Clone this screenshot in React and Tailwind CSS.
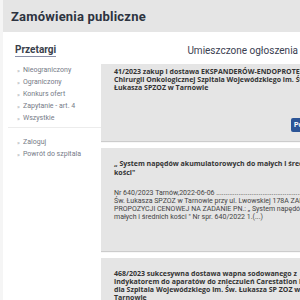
const mainLinks = ['Nieograniczony', 'Ograniczony', 'Konkurs ofert', 'Zapytanie - art. 4', 'Wszystkie'];
const otherLinks = ['Zaloguj', 'Powrót do szpitala'];

function NavItem({ label }) {
  return (
    <li className="flex items-center h-[12px] text-[7px] text-[#767b87]">
      <span className="w-[6px] text-[6px] text-[#a0a4ac]">»</span>
      <span>{label}</span>
    </li>
  );
}

export default function App() {
  return (
    <div className="w-[300px] h-[300px] overflow-hidden bg-[#f5f5f5] font-['Roboto',sans-serif]">
      <div className="ml-[3px] h-full flex flex-col bg-white">
        <header className="h-[32px] shrink-0 bg-[#e5e5e5] flex items-center pl-[8px]">
          <h1 className="text-[13px] font-bold text-[#2d3340] leading-none tracking-[0.2px]">Zamówienia publiczne</h1>
        </header>

        <div className="flex flex-1 min-h-0">
          <aside className="w-[98px] shrink-0 pt-[12px]">
            <h2 className="ml-[12px] w-fit text-[10px] font-bold text-[#3a3f4c] leading-[12px] border-b border-[#8a90a8]">
              Przetargi
            </h2>
            <ul className="mt-[7px] pl-[14px]">
              {mainLinks.map((l) => <NavItem key={l} label={l} />)}
            </ul>
            <div className="ml-[5px] mt-[3px] h-px bg-[#ececec]" />
            <ul className="mt-[8px] pl-[14px]">
              {otherLinks.map((l) => <NavItem key={l} label={l} />)}
            </ul>
          </aside>

          <main className="flex-1 min-w-0 overflow-hidden pt-[13px]">
            <h2 className="text-right pr-[2px] text-[10px] text-[#3a4050] leading-[12px] whitespace-nowrap">
              Umieszczone ogłoszenia
            </h2>

            <div className="mt-[7px] flex flex-col gap-[7px] w-[230px]">
              <div className="h-[77px] bg-[#e5e5e5] shadow-[0_1px_1px_rgba(0,0,0,0.2)] pl-[13px] pt-[4px] relative">
                <p className="font-['Open_Sans',sans-serif] text-[7px] font-bold text-[#333] leading-[8px] whitespace-nowrap">
                  41/2023 zakup i dostawa EKSPANDERÓW-ENDOPROTEZ dla Oddziału<br />
                  Chirurgii Onkologicznej Szpitala Wojewódzkiego im. Św.<br />
                  Łukasza SPZOZ w Tarnowie
                </p>
                <button className="absolute left-[190px] top-[54px] h-[14px] px-[3px] rounded-[2px] bg-[#2c5597] text-white text-[7px] font-bold leading-none">
                  Pokaż
                </button>
              </div>

              <div className="h-[103px] bg-[#e5e5e5] shadow-[0_1px_1px_rgba(0,0,0,0.2)] pl-[13px] pt-[11px]">
                <p className="font-['Open_Sans',sans-serif] text-[7px] font-bold text-[#333] leading-[9px] whitespace-nowrap">
                  „ System napędów akumulatorowych do małych i średnich<br />
                  kości"
                </p>
                <p className="mt-[12px] text-[7px] text-[#444] leading-[8px] whitespace-nowrap">
                  Nr 640/2023 Tarnów,2022-06-06 ...........................................................<br />
                  Św. Łukasza SPZOZ w Tarnowie przy ul. Lwowskiej 178A ZAPRASZA DO<br />
                  PROPOZYCJI CENOWEJ NA ZADANIE PN.: „ System napędów akumulatorowych do<br />
                  małych i średnich kości " Nr spr. 640/2022 1.(...)
                </p>
              </div>

              <div className="h-[80px] bg-[#e5e5e5] shadow-[0_1px_1px_rgba(0,0,0,0.2)] pl-[13px] pt-[12px]">
                <p className="font-['Open_Sans',sans-serif] text-[7px] font-bold text-[#333] leading-[8px] whitespace-nowrap">
                  468/2023 sukcesywna dostawa wapna sodowanego z<br />
                  indykatorem do aparatów do znieczuleń Carestation i Aespire<br />
                  dla Szpitala Wojewódzkiego im. Św. Łukasza SP ZOZ w<br />
                  Tarnowie
                </p>
              </div>
            </div>
          </main>
        </div>
      </div>
    </div>
  );
}
